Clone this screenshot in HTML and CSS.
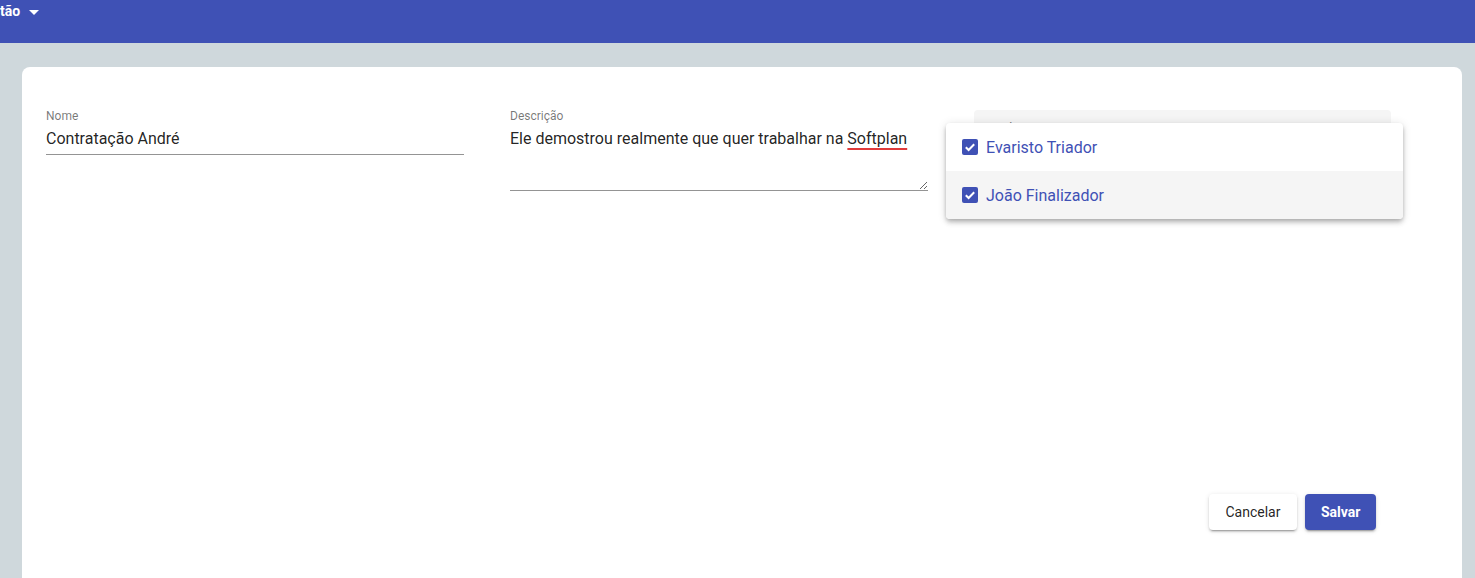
FILE: index.html
```html
<!DOCTYPE html>
<html lang="pt-BR">
<head>
<meta charset="utf-8">
<title>Contratação</title>
<link rel="stylesheet" href="styles.css">
</head>
<body>
<header class="topbar">
  <span class="menu-title">tão</span>
  <span class="caret"></span>
</header>
<main class="card">
  <form class="form">
    <div class="fields">
      <div class="field">
        <label class="label">Nome</label>
        <div class="control">Contratação André</div>
      </div>
      <div class="field">
        <label class="label">Descrição</label>
        <div class="control textarea">Ele demostrou realmente que quer trabalhar na <span class="misspelled">Softplan</span></div>
      </div>
      <div class="field select-field">
        <div class="fill">
          <label class="label fill-label">Usuários</label>
        </div>
        <div class="panel">
          <div class="option">
            <span class="checkbox"><svg viewBox="0 0 16 16" width="16" height="16"><path d="M3.8 8.2l2.8 2.8 5.6-5.8" fill="none" stroke="#fff" stroke-width="2"/></svg></span>
            <span class="option-text">Evaristo Triador</span>
          </div>
          <div class="option active">
            <span class="checkbox"><svg viewBox="0 0 16 16" width="16" height="16"><path d="M3.8 8.2l2.8 2.8 5.6-5.8" fill="none" stroke="#fff" stroke-width="2"/></svg></span>
            <span class="option-text">João Finalizador</span>
          </div>
        </div>
      </div>
    </div>
    <div class="actions">
      <button type="button" class="btn btn-cancel">Cancelar</button>
      <button type="button" class="btn btn-save">Salvar</button>
    </div>
  </form>
</main>
</body>
</html>
```
FILE: styles.css
```css
html, body {
  margin: 0;
  padding: 0;
}
body {
  background: #cfd8dc;
  font-family: Roboto, "Liberation Sans", Arial, sans-serif;
  height: 578px;
  overflow: hidden;
}
.topbar {
  height: 43px;
  background: #3f51b5;
  display: flex;
  align-items: flex-start;
  color: #fff;
}
.menu-title {
  font-size: 14px;
  font-weight: 700;
  line-height: 16px;
  margin-top: 3px;
}
.caret {
  width: 0;
  height: 0;
  border-left: 5px solid transparent;
  border-right: 5px solid transparent;
  border-top: 5px solid #fff;
  margin-left: 9px;
  margin-top: 10px;
}
.card {
  margin: 24px 13px 0 22px;
  background: #fff;
  border-radius: 8px 8px 0 0;
  height: 511px;
  box-sizing: border-box;
  padding: 42px 24px 0 24px;
}
.form {
  display: flex;
  flex-direction: column;
}
.fields {
  display: grid;
  grid-template-columns: 418px 418px 417px;
  column-gap: 46px;
  align-items: start;
}
.field {
  position: relative;
}
.label {
  display: block;
  font-size: 12px;
  line-height: 14px;
  color: rgba(0,0,0,.54);
  margin-bottom: 6px;
}
.control {
  font-size: 16px;
  line-height: 20px;
  color: rgba(0,0,0,.87);
  padding-bottom: 5px;
  border-bottom: 1px solid #949494;
}
.textarea {
  height: 56px;
  resize: vertical;
  overflow: hidden;
}
.misspelled {
  text-decoration: underline;
  text-decoration-color: #e03b3b;
  text-decoration-thickness: 2px;
  text-underline-offset: 4px;
}
.select-field {
  margin-top: 1px;
}
.fill {
  background: #f5f5f5;
  border-radius: 4px 4px 0 0;
  height: 60px;
  padding: 11px 12px 0;
  box-sizing: border-box;
}
.fill-label {
  margin: 0;
}
.panel {
  position: absolute;
  left: -28px;
  top: 13px;
  width: 457px;
  background: #fff;
  border-radius: 4px;
  box-shadow: 0 2px 4px -1px rgba(0,0,0,.2), 0 4px 5px 0 rgba(0,0,0,.14), 0 1px 10px 0 rgba(0,0,0,.12);
  overflow: hidden;
}
.option {
  height: 48px;
  display: flex;
  align-items: center;
  padding-left: 16px;
}
.option.active {
  background: #f5f5f5;
}
.checkbox {
  width: 16px;
  height: 16px;
  border-radius: 2px;
  background: #3f51b5;
  display: flex;
  margin-right: 8px;
}
.option-text {
  font-size: 16px;
  color: #3f51b5;
}
.actions {
  display: flex;
  justify-content: flex-end;
  gap: 8px;
  margin-top: 303px;
  padding-right: 62px;
}
.btn {
  height: 36px;
  border: none;
  border-radius: 4px;
  padding: 0 16px;
  font-family: Roboto, "Liberation Sans", Arial, sans-serif;
  font-size: 14px;
  cursor: pointer;
}
.btn-cancel {
  background: #fff;
  color: rgba(0,0,0,.87);
  width: 88px;
  box-shadow: 0 3px 1px -2px rgba(0,0,0,.2), 0 2px 2px 0 rgba(0,0,0,.14), 0 1px 5px 0 rgba(0,0,0,.12);
}
.btn-save {
  background: #3f51b5;
  color: #fff;
  font-weight: 700;
  width: 71px;
  box-shadow: 0 3px 1px -2px rgba(0,0,0,.2), 0 2px 2px 0 rgba(0,0,0,.14), 0 1px 5px 0 rgba(0,0,0,.12);
}
```
